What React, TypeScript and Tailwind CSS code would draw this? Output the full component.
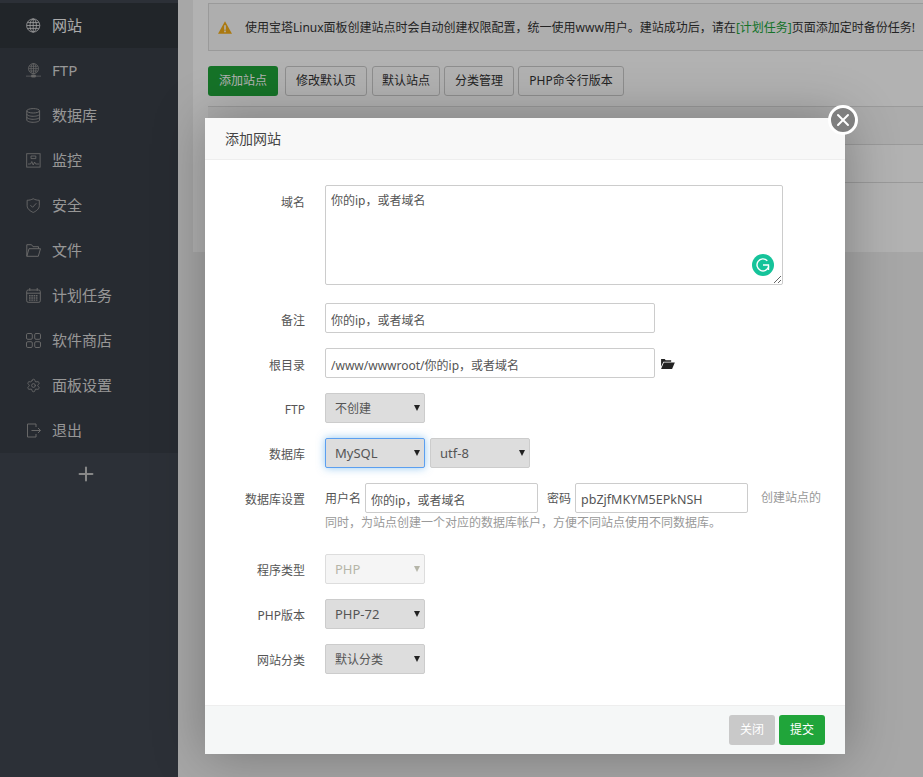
import React from 'react';
import { Plus, Settings, X } from 'lucide-react';

const FONT = "font-['Noto_Sans','Noto_Sans_CJK_SC',sans-serif]";

type IconProps = { className?: string };

const IconGlobe = ({ className }: IconProps) => (
  <svg viewBox="0 0 15 15" fill="none" stroke="currentColor" strokeWidth="0.8" className={className}>
    <circle cx="7.2" cy="7.5" r="6.6" />
    <ellipse cx="7.2" cy="7.5" rx="3.2" ry="6.6" />
    <path d="M.8 7.5h12.8M1.6 4.6h11.2M1.6 10.4h11.2M7.2 1v13" />
  </svg>
);

const IconFtp = ({ className }: IconProps) => (
  <svg viewBox="0 0 16 16" fill="none" stroke="currentColor" strokeWidth="0.8" className={className}>
    <circle cx="8" cy="6" r="5.4" />
    <ellipse cx="8" cy="6" rx="2.6" ry="5.4" />
    <path d="M2.7 6h10.6M3.4 3.5h9.2M3.4 8.5h9.2M8 .6v10.8" />
    <path d="M0 14h16" />
    <path d="M6 12.8h4v2.2H6z" fill="currentColor" />
  </svg>
);

const IconDatabase = ({ className }: IconProps) => (
  <svg viewBox="0 0 15 15" fill="none" stroke="currentColor" strokeWidth="1" className={className}>
    <ellipse cx="7.2" cy="2.8" rx="6.4" ry="2.2" />
    <path d="M.8 2.8v9.2c0 1.3 2.9 2.3 6.4 2.3s6.4-1 6.4-2.3V2.8" />
    <path d="M.8 6c0 1.3 2.9 2.3 6.4 2.3s6.4-1 6.4-2.3M.8 9c0 1.3 2.9 2.3 6.4 2.3s6.4-1 6.4-2.3" />
  </svg>
);

const IconMonitor = ({ className }: IconProps) => (
  <svg viewBox="0 0 15 15" fill="none" stroke="currentColor" strokeWidth="0.9" className={className}>
    <rect x="0.7" y="0.7" width="13.4" height="13.4" />
    <path d="M2 11h2.6l1.2-2.5 1.4 3.5 1.4-3 .9 2h3.6" />
    <path d="M5 3h4.8v2.6H5z" />
  </svg>
);

const IconShield = ({ className }: IconProps) => (
  <svg viewBox="0 0 15 16" fill="none" stroke="currentColor" strokeWidth="1" className={className}>
    <path d="M7.2 .8c2 1.1 4 1.6 6.5 1.6v5.8c0 3.4-3.4 5.9-6.5 7.2-3.1-1.3-6.5-3.8-6.5-7.2V2.4c2.500 0 4.500-.5 6.500-1.600z" />
    <path d="M4.2 7.6l2.300 2.300 4-4.300" />
  </svg>
);

const IconFolder = ({ className }: IconProps) => (
  <svg viewBox="0 0 15 14" fill="none" stroke="currentColor" strokeWidth="1" className={className}>
    <path d="M.8 12.800V1.200h4.700l1.500 2h5.500v2" />
    <path d="M.8 12.800h11.500l2.200-7.600H3z" />
  </svg>
);

const IconCalendar = ({ className }: IconProps) => (
  <svg viewBox="0 0 15 15" fill="none" stroke="currentColor" strokeWidth="1" className={className}>
    <rect x="0.7" y="2" width="13.6" height="12.3" rx="1.5" />
    <path d="M.7 5.200h13.600M3.800 0v2.800M11.200 0v2.800" />
    <path d="M3 7.800h9M3 10h9M3 12.100h9" strokeDasharray="1.6 0.7" strokeWidth="1.4" />
  </svg>
);

const IconGrid = ({ className }: IconProps) => (
  <svg viewBox="0 0 15 15" fill="none" stroke="currentColor" strokeWidth="1" className={className}>
    <rect x="0.5" y="0.5" width="5.8" height="5.8" rx="1.3" />
    <rect x="8.7" y="0.5" width="5.8" height="5.8" rx="1.3" />
    <rect x="0.5" y="8.7" width="5.8" height="5.8" rx="1.3" />
    <rect x="8.7" y="8.7" width="5.8" height="5.8" rx="1.3" />
  </svg>
);

const IconGear = ({ className }: IconProps) => <Settings className={className} strokeWidth={1.5} />;

const IconLogout = ({ className }: IconProps) => (
  <svg viewBox="0 0 15 15" fill="none" stroke="currentColor" strokeWidth="1" className={className}>
    <path d="M10 4V1H1.500v13H10v-3" />
    <path d="M5.500 7.500h8.800M12 5l2.500 2.500L12 10" />
  </svg>
);

const navItems = [
  { label: '网站', icon: IconGlobe, active: true },
  { label: 'FTP', icon: IconFtp },
  { label: '数据库', icon: IconDatabase },
  { label: '监控', icon: IconMonitor },
  { label: '安全', icon: IconShield },
  { label: '文件', icon: IconFolder },
  { label: '计划任务', icon: IconCalendar },
  { label: '软件商店', icon: IconGrid },
  { label: '面板设置', icon: IconGear },
  { label: '退出', icon: IconLogout },
];

const toolbar = [
  { label: '修改默认页', width: 'w-[82px] mr-[1px]' },
  { label: '默认站点', width: 'w-[68px]' },
  { label: '分类管理', width: 'w-[70px]' },
  { label: 'PHP命令行版本', width: 'w-[106px]' },
];

const Sidebar = () => (
  <div className="w-[178px] shrink-0 flex flex-col bg-[#3f4650]">
    <div className="h-[3px]" />
    <div className="bg-[#383e47]">
      {navItems.map(item => (
        <div
          key={item.label}
          className={`h-[45px] flex items-center pl-[26px] gap-[11px] text-[15px] ${item.active ? 'bg-[#30353c] text-[#f5f5f5]' : 'text-[#d8d8d8]'}`}
        >
          <item.icon className={`w-[15px] h-[15px] shrink-0 ${item.active ? 'text-[#e8e8e8]' : 'text-[#949494]'}`} />
          <span>{item.label}</span>
        </div>
      ))}
    </div>
    <div className="h-[42px] flex items-center justify-center pr-[7px] text-[#c2c2c2]">
      <Plus className="w-[22px] h-[22px]" strokeWidth={2.2} />
    </div>
  </div>
);

const Background = () => (
  <div className="flex-1 bg-[#f0f0f0] pl-[15px] min-w-0">
    <div className="bg-white h-[252px] pl-[15px] pt-[3px]">
      <div className="h-[48px] border border-[#ddd] border-r-0 bg-[#fafafa] flex items-center pl-[9px] pt-[1px] gap-[13px] text-[12px] text-[#333] whitespace-nowrap overflow-hidden">
        <svg viewBox="0 0 18 16" className="w-[14px] h-[13px] shrink-0">
          <path d="M9 0 18 16H0z" fill="#f5ae17" />
          <path d="M8 5h2v6H8zM8 12h2v2H8z" fill="#fff" />
        </svg>
        <span>
          使用宝塔Linux面板创建站点时会自动创建权限配置，统一使用www用户。建站成功后，请在<span className="text-[#20a53a]">[计划任务]</span>页面添加定时备份任务!
        </span>
      </div>
      <div className="flex items-center gap-[4px] mt-[15px] text-[12px] text-[#333]">
        <div className="h-[30px] w-[70px] mr-[3px] rounded-[3px] bg-[#20a53a] text-white flex items-center justify-center">添加站点</div>
        {toolbar.map(t => (
          <div key={t.label} className={`h-[30px] ${t.width} rounded-[3px] border border-[#ccc] bg-white flex items-center justify-center`}>{t.label}</div>
        ))}
      </div>
      <div className="mt-[10px] border-t border-[#ddd]">
        <div className="h-[38px] border-b border-[#ddd] bg-[#f6f6f6]" />
        <div className="h-[38px] border-b border-[#ddd]" />
      </div>
    </div>
  </div>
);

const Label = ({ children, low }: { children: React.ReactNode; low?: boolean }) => (
  <label className={`w-[100px] shrink-0 text-right text-[12px] text-[#555] ${low ? 'pt-[9px]' : 'pt-[8px]'}`}>{children}</label>
);

const Select = ({ value, latin, disabled, focused }: { value: string; latin?: boolean; disabled?: boolean; focused?: boolean }) => (
  <div className="relative w-[100px] h-[30px]">
    <select
      defaultValue={value}
      disabled={disabled}
      className={`appearance-none block w-full h-full pl-[9px] pt-[1px] rounded-[2px] border ${latin ? 'text-[13px]' : 'text-[12px]'} ${
        disabled
          ? 'bg-[#f5f5f5] border-[#ddd] text-[#b5b5a8]'
          : focused
          ? 'bg-[#ddd] border-[#5b9ff0] text-[#555] shadow-[0_0_8px_rgba(102,175,233,.7)]'
          : 'bg-[#ddd] border-[#ccc] text-[#555]'
      }`}
    >
      <option>{value}</option>
    </select>
    <svg viewBox="0 0 6 6" className={`absolute left-[89px] top-[12px] w-[6px] h-[6px] ${disabled ? 'text-[#b5b5a8]' : 'text-[#222]'}`} fill="currentColor">
      <path d="M0 0h6L3 6z" />
    </svg>
  </div>
);

const Input = ({ value, className }: { value: string; className: string }) => (
  <input
    defaultValue={value}
    className={`h-[30px] px-[5px] pt-[3px] text-[#555] border border-[#ccc] rounded-[2px] bg-white ${className}`}
  />
);

const Modal = () => (
  <div className="absolute left-[205px] top-[118px] w-[640px] h-[636px] bg-white flex flex-col shadow-[1px_1px_50px_rgba(0,0,0,0.3)]">
    <div className="absolute -right-[13px] -top-[13px] w-[30px] h-[30px] rounded-full bg-[#7f7f7f] border-[3px] border-white flex items-center justify-center">
      <X className="w-[20px] h-[20px] text-white" strokeWidth={2.4} />
    </div>
    <div className="h-[42px] shrink-0 bg-[#f8f8f8] border-b border-[#eee] pl-[20px] flex items-center text-[14px] text-[#444]">添加网站</div>
    <div className="flex-1 pt-[25px] flex flex-col">
      <div className="flex gap-[20px]">
        <Label low>域名</Label>
        <div className="relative w-[458px] h-[100px]">
          <textarea
            defaultValue="你的ip，或者域名"
            className="block w-full h-full px-[5px] pt-[6px] text-[12px] text-[#555] border border-[#ccc] rounded-[2px] bg-white"
          />
          <div className="absolute right-[9px] bottom-[9px] w-[22px] h-[22px] rounded-full bg-[#15c39a] flex items-center justify-center">
            <svg viewBox="0 0 16 16" fill="none" stroke="#fff" strokeWidth="1.4" className="w-[16px] h-[16px]">
              <path d="M12.300 3.700A6 6 0 1 0 13.800 9.500" />
              <path d="M8 8h5.500v5" />
            </svg>
          </div>
        </div>
      </div>
      <div className="flex gap-[20px] mt-[18px]">
        <Label low>备注</Label>
        <Input value="你的ip，或者域名" className="w-[330px] text-[12px]" />
      </div>
      <div className="flex gap-[20px] mt-[15px]">
        <Label low>根目录</Label>
        <Input value="/www/wwwroot/你的ip，或者域名" className="w-[330px] text-[12px]" />
        <svg viewBox="0 0 16 12" fill="#222" className="w-[15px] h-[11px] -ml-[15px] mt-[10px]">
          <path d="M1 1h4l1 1.500h6V4H3.500L1 9.500zM4 5h12l-3 7H1z" />
        </svg>
      </div>
      <div className="flex gap-[20px] mt-[15px]">
        <Label>FTP</Label>
        <Select value="不创建" />
      </div>
      <div className="flex gap-[20px] mt-[15px]">
        <Label>数据库</Label>
        <div className="flex gap-[5px]">
          <Select value="MySQL" latin focused />
          <Select value="utf-8" latin />
        </div>
      </div>
      <div className="flex gap-[20px] mt-[15px]">
        <Label>数据库设置</Label>
        <div className="w-[500px] text-[12px] text-[#999]">
          <div className="flex items-center">
            <span className="text-[#555] pt-[2px]">用户名</span>
            <Input value="你的ip，或者域名" className="w-[173px] ml-[4px] text-[12px]" />
            <span className="text-[#555] ml-[9px] pt-[2px]">密码</span>
            <Input value="pbZjfMKYM5EPkNSH" className="w-[173px] ml-[4px] text-[12.5px]" />
            <span className="ml-[13px]">创建站点的</span>
          </div>
          <div className="mt-[1px]">同时，为站点创建一个对应的数据库帐户，方便不同站点使用不同数据库。</div>
        </div>
      </div>
      <div className="flex gap-[20px] mt-[22px]">
        <Label>程序类型</Label>
        <Select value="PHP" latin disabled />
      </div>
      <div className="flex gap-[20px] mt-[15px]">
        <Label>PHP版本</Label>
        <Select value="PHP-72" latin />
      </div>
      <div className="flex gap-[20px] mt-[15px]">
        <Label>网站分类</Label>
        <Select value="默认分类" />
      </div>
    </div>
    <div className="h-[49px] shrink-0 bg-[#f5f7f7] border-t border-[#eee] flex items-center justify-end gap-[4px] pr-[20px] text-[12px] text-white">
      <div className="w-[46px] h-[30px] rounded-[3px] bg-[#c9c9c9] flex items-center justify-center">关闭</div>
      <div className="w-[46px] h-[30px] rounded-[3px] bg-[#20a53a] flex items-center justify-center">提交</div>
    </div>
  </div>
);

export default function App() {
  return (
    <div className={`relative w-[923px] h-[777px] overflow-hidden flex ${FONT}`}>
      <Sidebar />
      <Background />
      <div className="absolute inset-0 bg-black/30" />
      <Modal />
    </div>
  );
}
